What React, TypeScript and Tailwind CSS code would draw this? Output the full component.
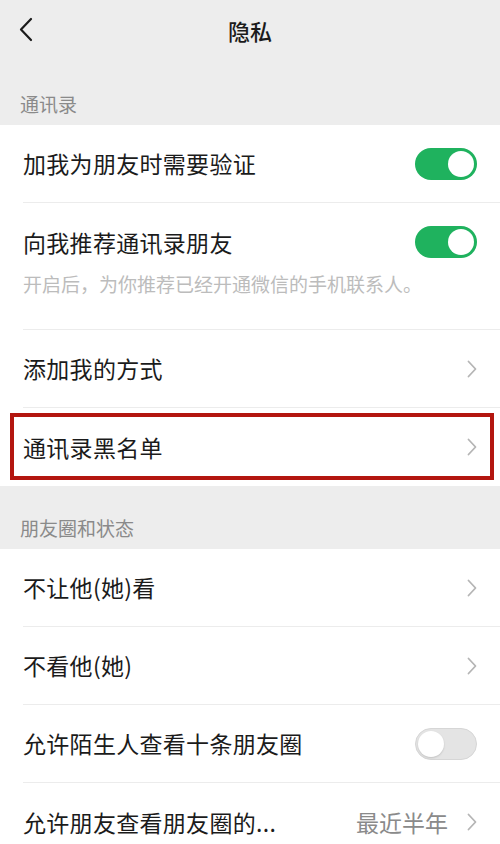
import React from "react";

const font = { fontFamily: '"Noto Sans CJK SC", "Noto Sans", sans-serif' };

function Chevron() {
  return (
    <svg width="10" height="18" viewBox="0 0 10 18" fill="none" className="shrink-0">
      <path d="M1.5 1.5L8.5 9L1.5 16.5" stroke="#b5b5b5" strokeWidth="1.8" strokeLinecap="round" strokeLinejoin="round" />
    </svg>
  );
}

function Toggle({ on }: { on: boolean }) {
  if (on) {
    return (
      <div className="w-[62px] h-[32px] rounded-full bg-[#1fb25e] flex items-center justify-end p-[3px] shrink-0">
        <div className="w-[26px] h-[26px] rounded-full bg-white" />
      </div>
    );
  }
  return (
    <div className="w-[62px] h-[32px] rounded-full bg-[#e4e4e4] border border-[#d6d6d6] flex items-center justify-start p-[2px] shrink-0">
      <div className="w-[26px] h-[26px] rounded-full bg-white shadow-[0_1px_2px_rgba(0,0,0,0.15)]" />
    </div>
  );
}

function Row({
  label,
  right,
  divider = true,
  highlight = false,
}: {
  label: string;
  right: React.ReactNode;
  divider?: boolean;
  highlight?: boolean;
}) {
  return (
    <div className="relative bg-white pl-[23px]">
      <div className={`h-[78px] flex items-center justify-between pr-[23px] ${divider ? "border-b border-[#ececec]" : ""}`}>
        <span className="text-[23px] text-[#1b1b1b] leading-none tracking-[0.3px]">{label}</span>
        {right}
      </div>
      {highlight && (
        <div className="absolute left-[10px] right-[6px] top-[5px] bottom-[6px] border-[4px] border-[#b3160f] pointer-events-none" />
      )}
    </div>
  );
}

export default function App() {
  return (
    <div className="w-[500px] h-[844px] overflow-hidden bg-[#ededed]" style={font}>
      {/* Header */}
      <div className="relative h-[60px] flex items-center justify-center">
        <svg className="absolute left-[18px] top-[17px]" width="16" height="25" viewBox="0 0 16 25" fill="none">
          <path d="M13 2L3 12.5L13 23" stroke="#1b1b1b" strokeWidth="2.2" strokeLinecap="round" strokeLinejoin="round" />
        </svg>
        <span className="text-[22px] font-medium text-[#1b1b1b]">隐私</span>
      </div>

      <div className="h-[65px] pt-[24px] pl-[20px] flex items-center">
        <span className="text-[19px] text-[#8a8a8a]">通讯录</span>
      </div>

      <div className="bg-white">
        <Row label="加我为朋友时需要验证" right={<Toggle on />} />
        <div className="bg-white pl-[23px]">
          <div className="h-[127px] border-b border-[#ececec] pr-[23px] pt-[23px]">
            <div className="flex items-center justify-between">
              <span className="text-[23px] text-[#1b1b1b] leading-none tracking-[0.3px]">向我推荐通讯录朋友</span>
              <Toggle on />
            </div>
            <div className="mt-[16px] text-[19px] text-[#bcbcbc] leading-none">开启后，为你推荐已经开通微信的手机联系人。</div>
          </div>
        </div>
        <Row label="添加我的方式" right={<Chevron />} />
        <Row label="通讯录黑名单" right={<Chevron />} divider={false} highlight />
      </div>

      <div className="h-[63px] pt-[21px] pl-[20px] flex items-center">
        <span className="text-[19px] text-[#8a8a8a]">朋友圈和状态</span>
      </div>

      <div className="bg-white">
        <Row label="不让他(她)看" right={<Chevron />} />
        <Row label="不看他(她)" right={<Chevron />} />
        <Row label="允许陌生人查看十条朋友圈" right={<Toggle on={false} />} />
        <Row
          label="允许朋友查看朋友圈的..."
          right={
            <div className="flex items-center gap-[19px]">
              <span className="text-[23px] text-[#8a8a8a] leading-none">最近半年</span>
              <Chevron />
            </div>
          }
          divider={false}
        />
      </div>
    </div>
  );
}
